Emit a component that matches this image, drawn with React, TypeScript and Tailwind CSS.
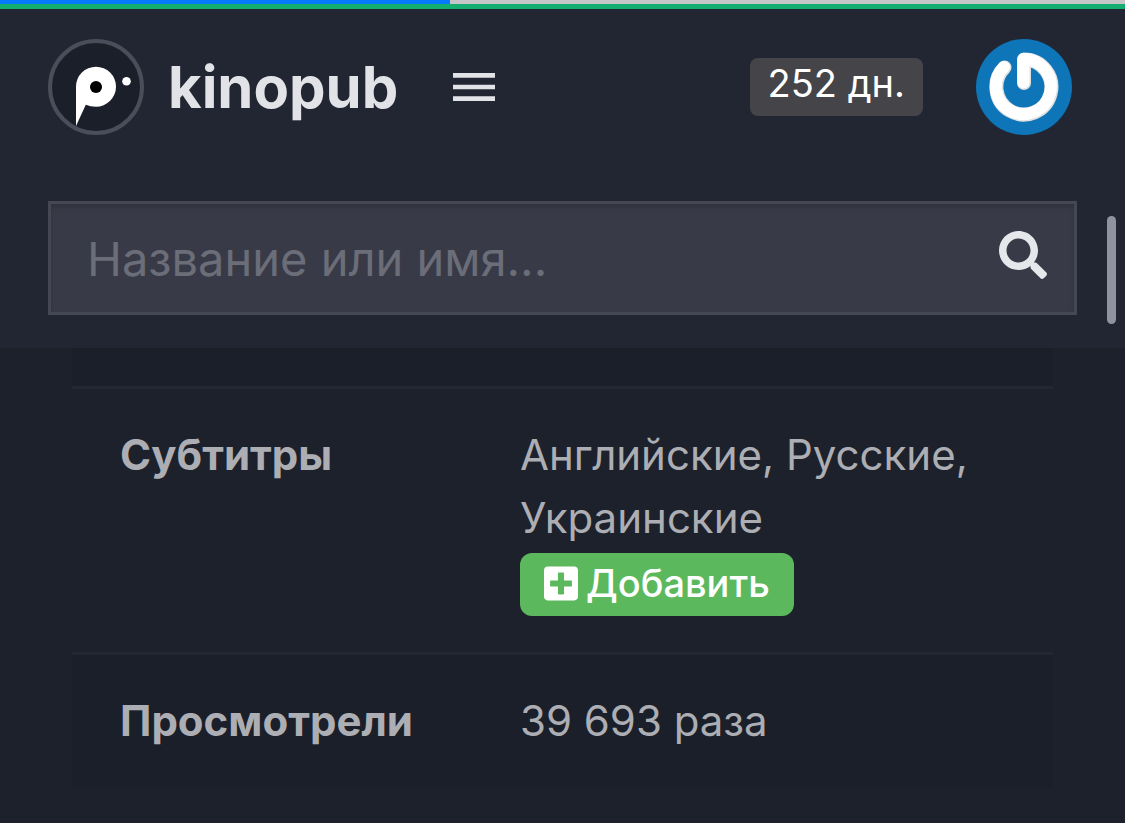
import type { ReactNode } from 'react'
import { FaPlusSquare, FaSearch } from 'react-icons/fa'
import { MdMenu } from 'react-icons/md'

function Logo() {
  return (
    <svg viewBox="0 0 96 96" className="size-24 shrink-0" aria-hidden="true">
      <circle cx="48" cy="48" r="46" fill="#1b1f29" stroke="#4b4e5a" strokeWidth="4" />
      <path d="M28 47.7a20 20 0 1 1 20 20q-5.5 0-10.2-2L28 87z" fill="#fff" />
      <circle cx="48" cy="48" r="6" fill="#000" />
      <circle cx="78.5" cy="42.3" r="4.3" fill="#fff" />
    </svg>
  )
}

function Avatar() {
  return (
    <svg viewBox="0 0 96 96" className="size-24 shrink-0" aria-hidden="true">
      <circle cx="48" cy="48" r="48" fill="#0d75b8" />
      <g fill="none" strokeLinecap="round" strokeLinejoin="round">
        <path d="M48 44V20.5A27.5 27.5 0 1 1 28.5 28.5" stroke="#dfe0e1" strokeWidth="14" />
        <path d="M47.5 43.5V20A27.5 27.5 0 1 1 28 28" stroke="#fff" strokeWidth="12" />
      </g>
    </svg>
  )
}

function InfoRow({ label, children }: { label: string; children: ReactNode }) {
  return (
    <tr className="border-t-3 border-[#232731] align-top even:bg-[#1b1f29]">
      <th scope="row" className="w-[400px] pt-[34px] pb-9 pl-12 text-left font-bold">
        {label}
      </th>
      <td className="px-12 pt-[34px] pb-9">{children}</td>
    </tr>
  )
}

export default function App() {
  return (
    <div className="relative min-h-screen bg-[#1d212b] font-['Inter',sans-serif] text-[#acaeb4]">
      {/* Page loading */}
      <div className="h-1 bg-[#c6c6c9]">
        <div className="h-full w-2/5 bg-[#057aff]" />
      </div>

      <header className="border-t-5 border-[#15ae71] bg-[#212632] px-12 pt-[30px] pb-[33px]">
        <div className="flex items-center pr-[5px]">
          <a href="#" className="flex items-center gap-6 text-[58px] leading-[64px] font-bold text-[#e2e3e7]">
            <Logo />
            kinopub
          </a>
          <button type="button" aria-label="Меню" className="ml-12 text-[#e2e3e7]">
            <MdMenu className="size-14" />
          </button>
          <a
            href="#"
            className="mr-[53px] ml-auto rounded-lg bg-[#444449] px-[18px] pb-2 text-[38px] leading-[50px] text-white"
          >
            252 дн.
          </a>
          <a href="#" aria-label="Профиль">
            <Avatar />
          </a>
        </div>

        <form className="mt-[66px] flex items-start border-3 border-[#454853] bg-[#383b47] shadow-[inset_0_3px_4px_rgba(0,0,0,0.15)]">
          <input
            type="search"
            aria-label="Поиск"
            placeholder="Название или имя..."
            className="h-[108px] min-w-0 flex-1 bg-transparent pl-9 text-[47px] text-white outline-none placeholder:text-[#6b6d78]"
          />
          <button type="submit" aria-label="Найти" className="px-[27px] pt-[27px] text-[#e6e7ea]">
            <FaSearch className="size-12" />
          </button>
        </form>
      </header>

      <main className="px-[72px]">
        <div className="h-[38px] bg-[#1b1f29]" />
        <table className="w-full table-fixed border-collapse text-[42px] leading-[63px]">
          <tbody>
            <InfoRow label="Субтитры">
              Английские, Русские, Украинские
              <button
                type="button"
                className="mt-1 flex h-[63px] items-center gap-2 rounded-xl bg-[#5cb85c] px-6 pb-0.5 text-[38px] font-medium text-white"
              >
                <FaPlusSquare className="h-[39px] w-[34px]" />
                Добавить
              </button>
            </InfoRow>
            <InfoRow label="Просмотрели">39 693 раза</InfoRow>
          </tbody>
        </table>
      </main>

      {/* Scroll thumb */}
      <div className="absolute top-[216px] right-[9px] h-[108px] w-[9px] rounded-full bg-[#9092a0]" />
    </div>
  )
}
